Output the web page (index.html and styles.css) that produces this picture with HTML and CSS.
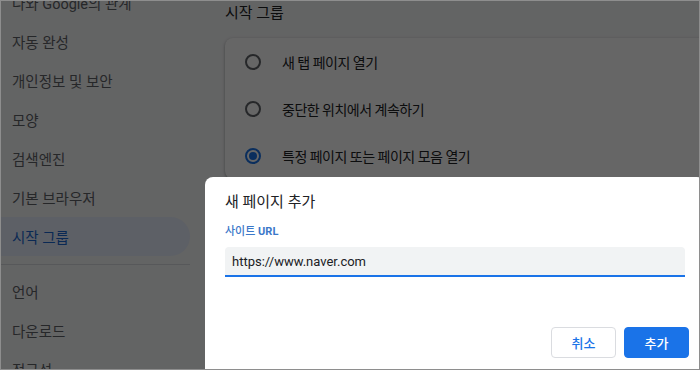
FILE: index.html
```html
<!DOCTYPE html>
<html lang="ko">
<head>
  <meta charset="UTF-8">
  <meta name="viewport" content="width=device-width, initial-scale=1.0">
  <title>설정 - 시작 그룹</title>
  <link rel="stylesheet" href="styles.css">
</head>
<body>
  <div class="screen">
    <div class="page">
      <nav class="sidebar">
        <div class="nav-group">
          <a class="nav-item">나와 Google의 관계</a>
          <a class="nav-item">자동 완성</a>
          <a class="nav-item">개인정보 및 보안</a>
          <a class="nav-item">모양</a>
          <a class="nav-item">검색엔진</a>
          <a class="nav-item">기본 브라우저</a>
          <a class="nav-item nav-item-active">시작 그룹</a>
        </div>
        <div class="nav-divider"></div>
        <div class="nav-group">
          <a class="nav-item">언어</a>
          <a class="nav-item">다운로드</a>
          <a class="nav-item">접근성</a>
        </div>
      </nav>

      <main class="content">
        <h2 class="section-title">시작 그룹</h2>
        <div class="card">
          <div class="radio-row">
            <span class="radio"></span>
            <span>새 탭 페이지 열기</span>
          </div>
          <div class="radio-row">
            <span class="radio"></span>
            <span>중단한 위치에서 계속하기</span>
          </div>
          <div class="radio-row">
            <span class="radio radio-checked"></span>
            <span>특정 페이지 또는 페이지 모음 열기</span>
          </div>
        </div>
      </main>
    </div>

    <!-- Dialog overlay -->
    <div class="scrim"></div>
    <div class="dialog">
      <h3 class="dialog-title">새 페이지 추가</h3>
      <label class="field-label" for="site-url">사이트 <b>URL</b></label>
      <input class="field-input" id="site-url" type="text" value="https://www.naver.com">
      <div class="dialog-buttons">
        <button class="button button-outline">취소</button>
        <button class="button">추가</button>
      </div>
    </div>
  </div>
</body>
</html>
```

FILE: styles.css
```css
body {
  margin: 0;
  padding: 0;
  font-family: Roboto, "Noto Sans CJK KR", sans-serif;
}

.screen {
  position: relative;
  width: 700px;
  height: 370px;
  box-sizing: border-box;
  border: 1px solid #8e8e8e;
  background-color: #f8f9fa;
  overflow: hidden;
}

.page {
  display: grid;
  grid-template-columns: 204px 1fr;
  height: 100%;
}

/* Sidebar */
.sidebar {
  margin-top: -18px;
}

.nav-item {
  display: flex;
  align-items: center;
  box-sizing: border-box;
  width: 189px;
  height: 39px;
  padding-left: 11px;
  border-radius: 0 20px 20px 0;
  font-size: 14.5px;
  color: #5f6368;
}

.nav-item-active {
  background-color: #e8f0fe;
  color: #1967d2;
}

.nav-divider {
  width: 189px;
  height: 1px;
  margin: 8px 0 7px;
  background-color: #dadce0;
}

/* Main content */
.content {
  padding: 2px 0 0 20px;
}

.section-title {
  margin: 0 0 15px;
  font-size: 15px;
  font-weight: 400;
  line-height: 20px;
  color: #202124;
}

.card {
  margin-right: -20px;
  background-color: white;
  border-radius: 8px;
  box-shadow: 0 1px 2px rgba(60, 64, 67, 0.3), 0 1px 3px 1px rgba(60, 64, 67, 0.15);
}

.radio-row {
  display: flex;
  align-items: center;
  gap: 21px;
  height: 47px;
  padding-left: 20px;
  font-size: 14px;
  letter-spacing: -0.5px;
  color: #202124;
}

.radio {
  position: relative;
  box-sizing: border-box;
  width: 16px;
  height: 16px;
  border: 2px solid #5f6368;
  border-radius: 50%;
}

.radio-checked {
  border-color: #1a73e8;
}

.radio-checked::after {
  content: "";
  position: absolute;
  top: 2px;
  left: 2px;
  width: 8px;
  height: 8px;
  border-radius: 50%;
  background-color: #1a73e8;
}

/* Dialog */
.scrim {
  position: absolute;
  inset: 0;
  background-color: rgba(0, 0, 0, 0.6);
}

.dialog {
  position: absolute;
  left: 204px;
  top: 176px;
  box-sizing: border-box;
  width: 500px;
  height: 220px;
  padding: 15px 20px 0;
  background-color: white;
  border-radius: 8px;
}

.dialog-title {
  margin: 0;
  font-size: 15px;
  font-weight: 400;
  line-height: 20px;
  color: #202124;
}

.field-label {
  display: block;
  margin-top: 13px;
  font-size: 11px;
  font-weight: 500;
  line-height: 14px;
  color: #3b78c9;
}

.field-label b {
  font-weight: 700;
}

.field-input {
  display: block;
  box-sizing: border-box;
  width: 100%;
  height: 30px;
  margin-top: 8px;
  padding: 0 7px;
  border: none;
  border-bottom: 2px solid #1a73e8;
  border-radius: 4px 4px 0 0;
  background-color: #f1f3f4;
  font-family: Roboto, sans-serif;
  font-size: 13px;
  color: #202124;
  outline: none;
}

.dialog-buttons {
  display: flex;
  justify-content: flex-end;
  gap: 8px;
  margin: 50px -4px 0 0;
}

.button {
  box-sizing: border-box;
  width: 65px;
  height: 31px;
  padding: 0;
  border: 1px solid #1a73e8;
  border-radius: 4px;
  background-color: #1a73e8;
  font-family: Roboto, "Noto Sans CJK KR", sans-serif;
  font-size: 13px;
  font-weight: 500;
  color: white;
  cursor: pointer;
}

.button-outline {
  border-color: #dadce0;
  background-color: white;
  color: #1a73e8;
}
```
